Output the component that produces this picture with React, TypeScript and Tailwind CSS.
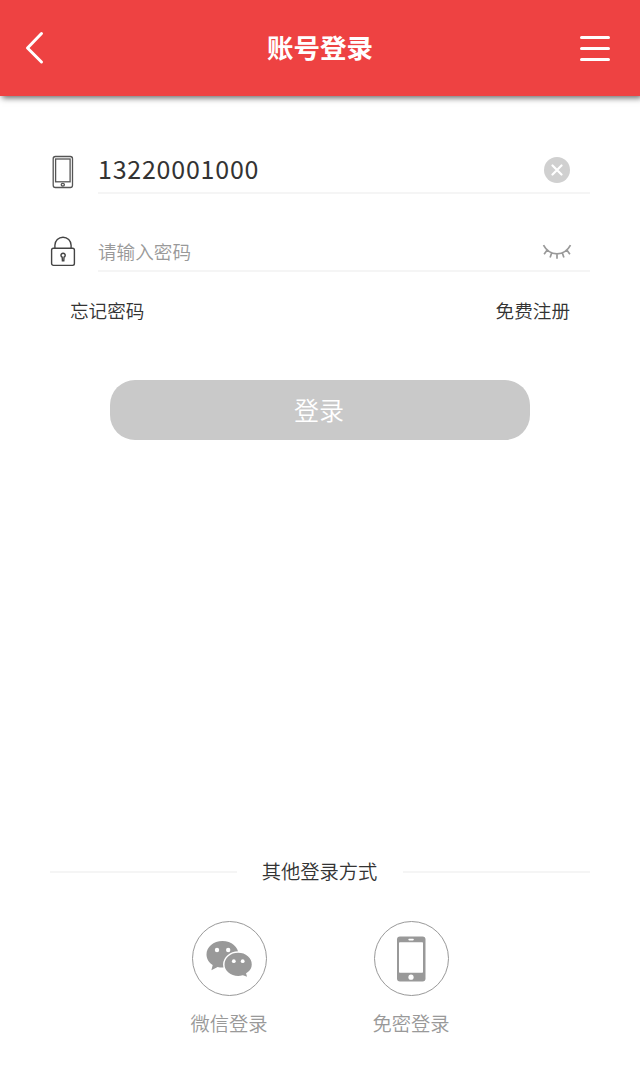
function PhoneOutline() {
  return (
    <svg width="22" height="34" viewBox="0 0 22 34" fill="none" stroke="#555" strokeWidth="1.3">
      <rect x="1.2" y="1.5" width="19.3" height="31" rx="2.2" />
      <rect x="3.6" y="4" width="14.5" height="22.8" />
      <ellipse cx="10.8" cy="29.7" rx="1.6" ry="1.3" />
    </svg>
  );
}

function LockOutline() {
  return (
    <svg width="26" height="31" viewBox="0 0 26 31" fill="none" stroke="#444" strokeWidth="1.4">
      <path d="M4.900 12.200V9.300a8.100 8.100 0 0 1 16.200 0v2.900" />
      <rect x="1.6" y="12.200" width="22.800" height="17.200" rx="1.800" />
      <path d="M12.200 21.200a2.100 2.100 0 1 1 1.800 0l-.2 3.600h-1.400Z" />
    </svg>
  );
}

function ClosedEye() {
  return (
    <svg width="30" height="16" viewBox="0 0 30 16" fill="none" stroke="#999" strokeWidth="1.7">
      <path d="M1.500 1.200C7.500 12.700 22.500 12.700 28.500 1.200M5 6.300l-2.900 3.900M9.700 8.900l-1.600 4.600M15 9.800v5M20.300 8.900l1.600 4.600M25 6.300l2.900 3.900" />
    </svg>
  );
}

function WeChat() {
  return (
    <svg width="48" height="38" viewBox="0 0 48 38">
      <path fill="#999" d="M17.500 1C8.400 1 1.500 7 1.500 14.500c0 4.300 2.300 8.100 6.200 10.600L6.400 30.300l6.200-3.300c1.600.4 3.200.6 4.900.6 9 0 16-5.900 16-13.100S26.500 1 17.500 1Z" />
      <path fill="#999" stroke="#fff" strokeWidth="1.5" d="M33.200 12.100c-8.100 0-14.400 5.600-14.400 12.300s6.300 12.300 14.400 12.300c1.700 0 3.200-.3 4.700-.7l5.300 2-1.300-4.300c3.500-2.200 5.600-5.500 5.600-9.300 0-6.700-6.200-12.300-14.300-12.300Z" />
      <g fill="#fff">
        <circle cx="12" cy="10" r="2.200" />
        <circle cx="23.200" cy="10" r="2.200" />
        <circle cx="28.800" cy="21.200" r="1.900" />
        <circle cx="37.700" cy="21.200" r="1.900" />
      </g>
    </svg>
  );
}

function PhoneSolid() {
  return (
    <svg width="30" height="46" viewBox="0 0 30 46">
      <rect x="1" y="0.500" width="28.500" height="45" rx="3" fill="#999" />
      <rect x="3" y="6.300" width="24" height="30.400" rx="0.800" fill="#fff" />
      <rect x="12.300" y="2.700" width="5.500" height="1.700" rx="0.800" fill="#fff" />
      <circle cx="15" cy="41.200" r="2.600" fill="#fff" />
    </svg>
  );
}

export default function App() {
  return (
    <div className="flex h-[1080px] w-[640px] flex-col overflow-hidden bg-white font-['Noto_Sans_CJK_SC',sans-serif] text-[#333]">
      <header className="flex h-24 shrink-0 items-center justify-between bg-[#ee4242] pr-[30px] pl-[25px] shadow-[2px_2px_6px_rgba(0,0,0,0.6)]">
        <button aria-label="返回" className="w-[35px]">
          <svg width="20" height="34" viewBox="0 0 20 34" fill="none" stroke="#fff" strokeWidth="3" strokeLinecap="round" strokeLinejoin="round">
            <path d="M16.500 2.500 2.500 17l14 14" />
          </svg>
        </button>
        <h1 className="pb-[2px] text-[26.500px] leading-none font-bold text-white">账号登录</h1>
        <button aria-label="菜单" className="flex w-[30px] flex-col gap-2">
          <span className="h-[3px] rounded-full bg-white" />
          <span className="h-[3px] rounded-full bg-white" />
          <span className="h-[3px] rounded-full bg-white" />
        </button>
      </header>

      <main className="flex grow flex-col">
        <div className="mt-[51px] mr-[50px] ml-[50px] flex h-[47px]">
          <div className="w-12 pt-2 pl-[2px]"><PhoneOutline /></div>
          <div className="flex grow items-center justify-between border-b-2 border-[#f5f5f5] pr-5">
            <span className="pb-[2px] text-[25px] leading-none tracking-[0.780px]">13220001000</span>
            <button aria-label="清除" className="flex size-[26px] items-center justify-center rounded-full bg-[#d0d0d0]">
              <svg width="12" height="12" viewBox="0 0 12 12" stroke="#fff" strokeWidth="2.200" strokeLinecap="round">
                <path d="m1.500 1.500 9 9m0-9-9 9" />
              </svg>
            </button>
          </div>
        </div>

        <div className="mt-[31px] mr-[50px] ml-[50px] flex h-[47px]">
          <div className="w-12 pt-[11px]"><LockOutline /></div>
          <div className="flex grow items-center justify-between border-b-2 border-[#f5f5f5] pt-[8px] pr-[18px]">
            <span className="text-[18.600px] leading-none font-[350] text-[#999]">请输入密码</span>
            <ClosedEye />
          </div>
        </div>

        <div className="mt-[28px] flex justify-between px-[70px] text-[18.600px] leading-5 font-[350]">
          <a>忘记密码</a>
          <a>免费注册</a>
        </div>

        <button className="mt-[60px] flex h-[60px] w-[420px] items-center justify-center self-center rounded-[25px] bg-[#c9c9c9] pr-[2px] pb-[2px] text-[25px] leading-none font-[350] text-white">
          登录
        </button>

        <div className="mt-[422px] flex h-5 items-center px-[50px]">
          <span className="h-[2px] w-[187px] bg-[#f5f5f5]" />
          <span className="grow pr-[1px] pb-[2px] text-center text-[19.300px] leading-5 font-[350]">其他登录方式</span>
          <span className="h-[2px] w-[187px] bg-[#f5f5f5]" />
        </div>

        <div className="mt-[39px] flex justify-center gap-[104px] text-[19.300px] leading-5 font-[350] text-[#999]">
          <div className="flex w-[78px] flex-col items-center gap-[17px]">
            <span className="flex size-[75px] items-center justify-center rounded-full border border-[#999]"><WeChat /></span>
            <span>微信登录</span>
          </div>
          <div className="flex w-[78px] flex-col items-center gap-[17px]">
            <span className="flex size-[75px] items-center justify-center rounded-full border border-[#999]"><PhoneSolid /></span>
            <span>免密登录</span>
          </div>
        </div>
      </main>
    </div>
  );
}
